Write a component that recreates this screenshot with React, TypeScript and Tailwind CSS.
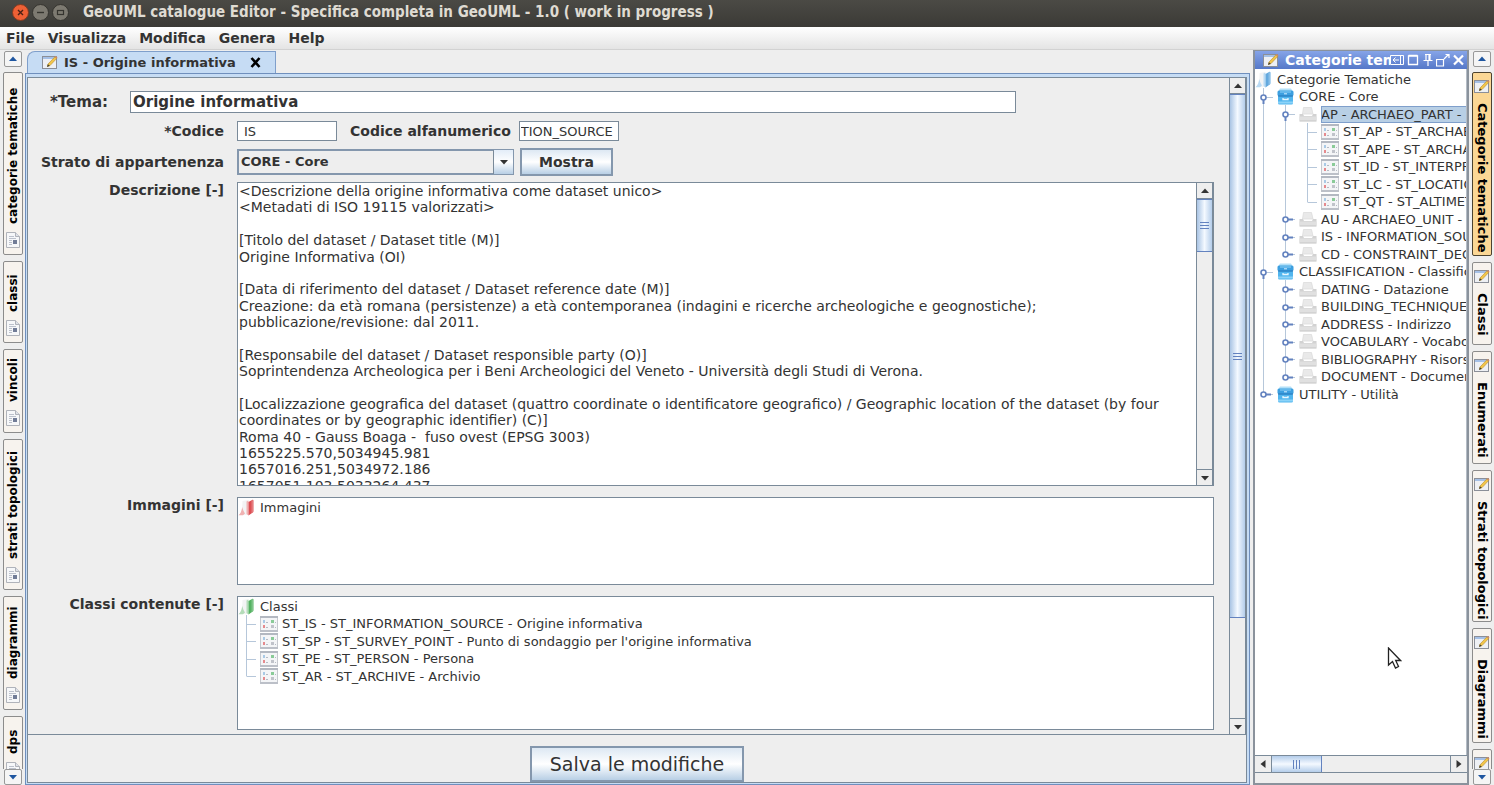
import { useState, type ReactNode } from "react";

type Guide = "blank" | "line" | "tee" | "elbow" | "open" | "closed" | "closedLast";
type IconName = "rootBlue" | "rootRed" | "rootGreen" | "store" | "tray" | "grid";

interface TreeRow {
  label: string;
  icon: IconName;
  guides: Guide[];
  selected?: boolean;
}

const LEFT_TABS = [
  { label: "categorie tematiche", size: "h-[183px]" },
  { label: "classi", size: "h-[82px]" },
  { label: "vincoli", size: "h-[84px]" },
  { label: "strati topologici", size: "h-[151px]" },
  { label: "diagrammi", size: "h-[114px]" },
  { label: "dps", size: "h-[69px]" },
];

const RIGHT_TABS = [
  { label: "Categorie tematiche", size: "h-[184px]", active: true },
  { label: "Classi", size: "h-[83px]" },
  { label: "Enumerati", size: "h-[113px]" },
  { label: "Strati topologici", size: "h-[152px]" },
  { label: "Diagrammi", size: "h-[115px]" },
  { label: "", size: "h-[84px]" },
];

const CATEGORIES: TreeRow[] = [
  { label: "Categorie Tematiche", icon: "rootBlue", guides: [] },
  { label: "CORE - Core", icon: "store", guides: ["open"] },
  { label: "AP - ARCHAEO_PART - Parte", icon: "tray", guides: ["line", "open"], selected: true },
  { label: "ST_AP - ST_ARCHAEO_PART", icon: "grid", guides: ["line", "line", "tee"] },
  { label: "ST_APE - ST_ARCHAEO_PART_EXT", icon: "grid", guides: ["line", "line", "tee"] },
  { label: "ST_ID - ST_INTERPRETATION", icon: "grid", guides: ["line", "line", "tee"] },
  { label: "ST_LC - ST_LOCATION", icon: "grid", guides: ["line", "line", "tee"] },
  { label: "ST_QT - ST_ALTIMETRY", icon: "grid", guides: ["line", "line", "elbow"] },
  { label: "AU - ARCHAEO_UNIT - Unità", icon: "tray", guides: ["line", "closed"] },
  { label: "IS - INFORMATION_SOURCE", icon: "tray", guides: ["line", "closed"] },
  { label: "CD - CONSTRAINT_DECREE", icon: "tray", guides: ["line", "closedLast"] },
  { label: "CLASSIFICATION - Classificazione", icon: "store", guides: ["open"] },
  { label: "DATING - Datazione", icon: "tray", guides: ["line", "closed"] },
  { label: "BUILDING_TECHNIQUE - Tecnica", icon: "tray", guides: ["line", "closed"] },
  { label: "ADDRESS - Indirizzo", icon: "tray", guides: ["line", "closed"] },
  { label: "VOCABULARY - Vocabolario", icon: "tray", guides: ["line", "closed"] },
  { label: "BIBLIOGRAPHY - Risorsa", icon: "tray", guides: ["line", "closed"] },
  { label: "DOCUMENT - Documento", icon: "tray", guides: ["line", "closedLast"] },
  { label: "UTILITY - Utilità", icon: "store", guides: ["closedLast"] },
];

const CLASSES: TreeRow[] = [
  { label: "Classi", icon: "rootGreen", guides: [] },
  { label: "ST_IS - ST_INFORMATION_SOURCE - Origine informativa", icon: "grid", guides: ["tee"] },
  { label: "ST_SP - ST_SURVEY_POINT - Punto di sondaggio per l'origine informativa", icon: "grid", guides: ["tee"] },
  { label: "ST_PE - ST_PERSON - Persona", icon: "grid", guides: ["tee"] },
  { label: "ST_AR - ST_ARCHIVE - Archivio", icon: "grid", guides: ["elbow"] },
];

const IMAGES: TreeRow[] = [{ label: "Immagini", icon: "rootRed", guides: [] }];

const DESCRIPTION = `<Descrizione della origine informativa come dataset unico>
<Metadati di ISO 19115 valorizzati>

[Titolo del dataset / Dataset title (M)]
Origine Informativa (OI)

[Data di riferimento del dataset / Dataset reference date (M)]
Creazione: da età romana (persistenze) a età contemporanea (indagini e ricerche archeologiche e geognostiche);
pubblicazione/revisione: dal 2011.

[Responsabile del dataset / Dataset responsible party (O)]
Soprintendenza Archeologica per i Beni Archeologici del Veneto - Università degli Studi di Verona.

[Localizzazione geografica del dataset (quattro coordinate o identificatore geografico) / Geographic location of the dataset (by four
coordinates or by geographic identifier) (C)]
Roma 40 - Gauss Boaga -  fuso ovest (EPSG 3003)
1655225.570,5034945.981
1657016.251,5034972.186
1657051.103,5033264.437`;

function PencilIcon() {
  return (
    <svg width="16" height="15" viewBox="0 0 16 15" className="shrink-0" aria-hidden="true">
      <rect x="0.5" y="1.5" width="14" height="12" fill="#eef0f4" stroke="#8b8f98" />
      <rect x="1" y="2" width="13" height="2" fill="#a5c0e6" />
      <path d="M5.5 11.5 L6 9 L12.8 2 L14.6 3.6 L8 10.6 Z" fill="#f2c64a" stroke="#b98a26" strokeWidth="0.6" />
      <path d="M5 12 L5.8 9.2 L7.8 10.8 Z" fill="#43402f" />
      <path d="M12.8 2 L13.8 1 L15.5 2.6 L14.6 3.6 Z" fill="#d38a62" />
    </svg>
  );
}

function SheetIcon() {
  return (
    <svg width="14" height="16" viewBox="0 0 14 16" className="shrink-0" aria-hidden="true">
      <path d="M0.5 0.5 H9.5 L13.5 4.5 V15.5 H0.5 Z" fill="#f6f7f9" stroke="#b0b3ba" />
      <path d="M9.5 0.5 V4.5 H13.5" fill="#dfe2e8" stroke="#b0b3ba" />
      <path d="M3 4.5 H8 M3 6.5 H10 M3 8.5 H6 M3 10.5 H6 M3 12.5 H6" stroke="#bcc1cc" />
      <rect x="7" y="8" width="4" height="4" fill="#717c97" />
    </svg>
  );
}

function FolderRoot({ light, dark }: { light: string; dark: string }) {
  return (
    <svg width="16" height="17" viewBox="0 0 16 17" aria-hidden="true">
      <path d="M1 16 Q4.5 13 4.5 2 L10 1 V16 Z" fill="#f3f4f5" />
      <path d="M0.5 16.2 Q3.5 14 4.2 8 Q5.5 13 7 14.5 L5 16.2 Z" fill={light} />
      <path d="M8.5 2.5 L10.5 1.5 V16.5 L8.5 15 Z" fill={light} />
      <path d="M10.5 3 L14.5 0.8 Q15.5 0.5 15.5 2 V12 Q15.5 13 14.8 13.5 L10.5 16.5 Z" fill={dark} />
      <path d="M13.5 1.4 L15.5 1 V12.5 L13.5 14.2 Z" fill={light} opacity="0.45" />
    </svg>
  );
}

function TreeIcon({ name }: { name: IconName }) {
  switch (name) {
    case "rootBlue":
      return <FolderRoot light="#b9daf4" dark="#64a9de" />;
    case "rootRed":
      return <FolderRoot light="#f0b2b2" dark="#dc4f54" />;
    case "rootGreen":
      return <FolderRoot light="#b4dcb9" dark="#55b263" />;
    case "store":
      return (
        <svg width="17" height="17" viewBox="0 0 17 17" aria-hidden="true">
          <path d="M3 0.5 H14 L16 4 H1 Z" fill="#b3e0f8" />
          <rect x="0.5" y="2.5" width="16" height="5.5" rx="1.5" fill="#3c9fe0" />
          <rect x="1" y="7.5" width="15" height="9" rx="1.5" fill="#51b5ee" />
          <path d="M1 14.5 H16" stroke="#8cd3f8" strokeWidth="2" />
          <path d="M1 8 H16" stroke="#1c6db2" />
          <path d="M3 4 H14" stroke="#8fd2f7" />
          <path d="M6 10 V11.5 H11 V10" fill="none" stroke="#e8f7ff" strokeWidth="1.3" />
          <path d="M7 5.8 H10" stroke="#d5efff" />
        </svg>
      );
    case "tray":
      return (
        <svg width="18" height="15" viewBox="0 0 18 15" aria-hidden="true">
          <path d="M4.5 0.5 H12.5 L14 7 H3.5 Z" fill="#e9e9e9" stroke="#dcdcdc" strokeWidth="0.8" />
          <path d="M0.5 7 H4 L5 9 H13 L14 7 H17.5 V13.5 H0.5 Z" fill="#d2d2d2" />
          <rect x="0.5" y="9.5" width="17" height="4" fill="#e0e0e0" />
          <path d="M0.5 14 H17.5" stroke="#c2c2c2" />
        </svg>
      );
    default:
      return (
        <svg width="18" height="16" viewBox="0 0 18 16" aria-hidden="true">
          <rect x="0.5" y="0.5" width="17" height="15" fill="#f4f5f7" stroke="#c6c9cf" />
          <rect x="0" y="0" width="18" height="2" fill="#b3b8c1" />
          <rect x="0" y="14" width="18" height="2" fill="#bcc0c8" />
          <rect x="3" y="4" width="2" height="3" fill="#a9cae6" />
          <rect x="11" y="4" width="3" height="3" fill="#8acb98" />
          <rect x="3" y="9" width="2" height="3" fill="#e58a8e" />
          <rect x="11" y="9" width="3" height="3" fill="#c0c3ca" />
          <path d="M6 6.5 H8 M15 6.5 H16 M6 11.5 H8 M15 11.5 H16" stroke="#b6bbc4" />
        </svg>
      );
  }
}

function GuideCell({ kind }: { kind: Guide }) {
  const isHandle = kind === "open" || kind === "closed" || kind === "closedLast";
  return (
    <svg width="22" height="18" viewBox="0 0 22 18" className="shrink-0" aria-hidden="true">
      {kind !== "blank" && (
        <path d={kind === "elbow" || kind === "closedLast" ? "M8.5 0 V9" : "M8.5 0 V18"} stroke="#b6c7da" />
      )}
      {kind !== "blank" && kind !== "line" && <path d="M8.5 9.5 H18" stroke="#b6c7da" />}
      {isHandle && (
        <path d={kind === "open" ? "M8.5 9 V16" : "M9 9.5 H16"} stroke="#6382bf" strokeWidth="2" />
      )}
      {isHandle && <circle cx="8.5" cy="9.5" r="2.5" fill="#fff" stroke="#6382bf" strokeWidth="1.6" />}
    </svg>
  );
}

function Tree({ rows }: { rows: TreeRow[] }) {
  return (
    <ul className="min-w-0 overflow-hidden whitespace-nowrap text-[13px] leading-[17px]">
      {rows.map((row) => (
        <li key={row.label} className="flex items-center overflow-hidden odd:h-[18px] even:h-[17px]">
          {row.guides.map((kind, i) => (
            <GuideCell key={i} kind={kind} />
          ))}
          <span className="flex w-[22px] shrink-0 items-center">
            <TreeIcon name={row.icon} />
          </span>
          <span className={row.selected ? "flex-1 bg-[#b8cfe5] outline -outline-offset-1 outline-[#7f9fcb]" : ""}>
            {row.label}
          </span>
        </li>
      ))}
    </ul>
  );
}

type Direction = "up" | "down" | "left" | "right";

const ARROWS: Record<Direction, string> = {
  up: "M1 6 L5 1.5 L9 6 Z",
  down: "M1 2 L5 6.5 L9 2 Z",
  left: "M7.5 0 L2.5 4 L7.5 8 Z",
  right: "M2.5 0 L7.5 4 L2.5 8 Z",
};

function Arrow({ direction, className = "fill-[#333]" }: { direction: Direction; className?: string }) {
  return (
    <svg width="10" height="8" viewBox="0 0 10 8" className={className} aria-hidden="true">
      <path d={ARROWS[direction]} />
    </svg>
  );
}

function VerticalScrollbar({ thumb }: { thumb: string }) {
  return (
    <div className="flex w-[17px] shrink-0 flex-col border-x border-[#7a8a99] bg-[#eee]">
      <button type="button" aria-label="Scorri su" className="flex h-4 items-center justify-center border-b border-[#7a8a99]">
        <Arrow direction="up" />
      </button>
      <div className="min-h-0 flex-1">
        <div
          className={`flex items-center justify-center border-y border-[#6382bf] bg-linear-to-r from-[#a9c4e4] via-[#f4f9ff] to-[#b4cdea] ${thumb}`}
        >
          <div className="h-[7px] w-[9px] border-y border-[#6382bf] py-[2px]">
            <div className="h-px bg-[#6382bf]" />
          </div>
        </div>
      </div>
      <button type="button" aria-label="Scorri giù" className="flex h-4 items-center justify-center border-t border-[#7a8a99]">
        <Arrow direction="down" />
      </button>
    </div>
  );
}

function StripArrow({ direction }: { direction: "up" | "down" }) {
  return (
    <button
      type="button"
      aria-label={direction === "up" ? "Schede precedenti" : "Schede successive"}
      className="flex h-4 w-[18px] shrink-0 items-center justify-center rounded-[2px] border border-[#989898] bg-[#f5f5f5]"
    >
      <Arrow direction={direction} className="fill-[#1f56a0]" />
    </button>
  );
}

function FormRow({ label, htmlFor, children }: { label: string; htmlFor?: string; children: ReactNode }) {
  return (
    <div className="flex gap-[13px]">
      <label htmlFor={htmlFor} className="w-[195px] shrink-0 text-right text-sm font-bold leading-4">
        {label}
      </label>
      {children}
    </div>
  );
}

function LeftStrip() {
  return (
    <nav aria-label="Indici" className="flex w-[25px] shrink-0 flex-col items-center gap-[5px] pt-px">
      <StripArrow direction="up" />
      <div className="flex min-h-0 flex-1 flex-col gap-[6px] overflow-hidden">
        {LEFT_TABS.map((tab) => (
          <button
            key={tab.label}
            type="button"
            className={`flex w-5 shrink-0 rotate-180 items-center gap-2 rounded-[2px] border border-[#8c8c8c] bg-[#f7f3ee] pt-[6px] text-xs font-bold text-black [writing-mode:vertical-rl] ${tab.size}`}
          >
            <span className="rotate-180">
              <SheetIcon />
            </span>
            {tab.label}
          </button>
        ))}
      </div>
      <div className="-mt-[5px]">
        <StripArrow direction="down" />
      </div>
    </nav>
  );
}

function RightStrip() {
  return (
    <nav aria-label="Pannelli" className="flex w-[25px] shrink-0 flex-col items-center gap-[5px] pt-px">
      <StripArrow direction="up" />
      <div className="flex min-h-0 flex-1 flex-col gap-[6px] overflow-hidden">
        {RIGHT_TABS.map((tab) => (
          <button
            key={tab.label}
            type="button"
            aria-label={tab.label || "Altro"}
            className={`flex w-5 shrink-0 items-center gap-[9px] overflow-hidden whitespace-nowrap rounded-[2px] border pt-[6px] text-[13px] leading-4 font-bold text-black [writing-mode:vertical-rl] ${
              tab.active ? "border-[#4c4330] bg-[#fbd795]" : "border-[#8c8c8c] bg-[#f7f3ee]"
            } ${tab.size}`}
          >
            <PencilIcon />
            {tab.label}
          </button>
        ))}
      </div>
      <div className="-mt-[5px]">
        <StripArrow direction="down" />
      </div>
    </nav>
  );
}

function Editor() {
  const [theme, setTheme] = useState("Origine informativa");
  const [code, setCode] = useState("IS");
  const [alpha, setAlpha] = useState("TION_SOURCE");
  const [description, setDescription] = useState(DESCRIPTION);

  return (
    <main className="flex min-w-0 flex-1 flex-col">
      <div className="flex h-[23px] shrink-0 items-end pl-[2px] pt-[2px]">
        <div className="flex h-[22px] items-center gap-[6px] rounded-tl-[8px] border border-b-0 border-[#7f9fcb] bg-[#c6dcf4] px-[14px] font-bold">
          <PencilIcon />
          <span>IS - Origine informativa</span>
          <button type="button" aria-label="Chiudi scheda" className="ml-2">
            <svg width="11" height="11" viewBox="0 0 11 11" aria-hidden="true">
              <path d="M1.5 1 L9.5 10 M9.5 1 L1.5 10" stroke="#000" strokeWidth="2.6" />
            </svg>
          </button>
        </div>
      </div>

      <div className="flex min-h-0 flex-1 flex-col border border-[#6f8fbd] bg-[#c6dcf4] p-px pr-[2px] pt-[3px]">
        <div className="flex min-h-0 flex-1 flex-col border border-[#7a8a99] bg-[#eee]">
          <div className="flex min-h-0 flex-1 border-b border-[#7a8a99]">
            <form className="flex min-w-0 flex-1 flex-col pl-px pr-[15px] pt-[13px]">
              <div className="flex items-center">
                <label htmlFor="tema" className="w-[101px] pl-[21px] text-[15px] font-bold">
                  *Tema:
                </label>
                <input
                  id="tema"
                  value={theme}
                  onChange={(e) => setTheme(e.target.value)}
                  className="mr-[198px] h-[22px] min-w-0 flex-1 border border-[#7a8a99] bg-white px-[2px] text-[15px] font-bold"
                />
              </div>

              <div className="mt-2 flex items-center">
                <label htmlFor="codice" className="mr-[13px] w-[195px] text-right text-sm font-bold">
                  *Codice
                </label>
                <input
                  id="codice"
                  value={code}
                  onChange={(e) => setCode(e.target.value)}
                  className="mr-[13px] h-5 w-[100px] border border-[#7a8a99] bg-white px-[6px]"
                />
                <label htmlFor="alfa" className="mr-2 text-sm font-bold">
                  Codice alfanumerico
                </label>
                <input
                  id="alfa"
                  value={alpha}
                  onChange={(e) => setAlpha(e.target.value)}
                  className="h-5 w-[100px] border border-[#7a8a99] bg-white px-px"
                />
              </div>

              <div className="mt-[7px] flex items-center">
                <label htmlFor="strato" className="mr-[13px] w-[195px] text-right text-sm font-bold">
                  Strato di appartenenza
                </label>
                <div className="relative w-[277px]">
                  <select
                    id="strato"
                    className="block h-[26px] w-full appearance-none border-2 border-[#8497ad] bg-[#eee] px-[2px] font-bold"
                  >
                    <option>CORE - Core</option>
                    <option>CLASSIFICATION - Classificazione</option>
                    <option>UTILITY - Utilità</option>
                  </select>
                  <span className="pointer-events-none absolute inset-y-px right-px flex w-5 items-center justify-center border-l border-[#7a8a99] bg-linear-to-b from-[#e3edf8] via-white to-[#b8cfe5]">
                    <Arrow direction="down" />
                  </span>
                </div>
                <button
                  type="button"
                  className="ml-[6px] h-7 w-[93px] border-2 border-[#8497ad] bg-linear-to-b from-[#dde8f3] via-white to-[#b8cfe5] text-sm font-bold"
                >
                  Mostra
                </button>
              </div>

              <div className="mt-[6px] flex flex-col gap-[11px]">
                <FormRow label="Descrizione [-]" htmlFor="descrizione">
                  <div className="flex h-[304px] min-w-0 flex-1 border border-[#7a8a99] bg-white">
                    <textarea
                      id="descrizione"
                      value={description}
                      onChange={(e) => setDescription(e.target.value)}
                      className="min-w-0 flex-1 resize-none overflow-hidden pl-px text-sm leading-[1.17]"
                    />
                    <VerticalScrollbar thumb="h-[53px]" />
                  </div>
                </FormRow>
                <FormRow label="Immagini [-]">
                  <div className="h-[88px] min-w-0 flex-1 border border-[#7a8a99] bg-white">
                    <Tree rows={IMAGES} />
                  </div>
                </FormRow>
                <FormRow label="Classi contenute [-]">
                  <div className="h-[134px] min-w-0 flex-1 border border-[#7a8a99] bg-white">
                    <Tree rows={CLASSES} />
                  </div>
                </FormRow>
              </div>
            </form>
            <VerticalScrollbar thumb="h-[84%]" />
          </div>

          <div className="flex h-[47px] shrink-0 items-end justify-center">
            <button
              type="button"
              className="h-9 w-[214px] border-2 border-[#8497ad] bg-linear-to-b from-[#dde8f3] via-white to-[#b8cfe5] text-[19px]"
            >
              Salva le modifiche
            </button>
          </div>
        </div>
      </div>
    </main>
  );
}

function CategoryPanel() {
  return (
    <aside className="ml-[3px] flex w-[216px] shrink-0 flex-col border-2 border-t border-[#8a929c] bg-[#eee]">
      <header className="flex h-[18px] shrink-0 items-center bg-linear-to-b from-[#86a4e8] to-[#5578c8] pl-2 pr-[2px] text-white">
        <PencilIcon />
        <h2 className="ml-[6px] min-w-0 flex-1 overflow-hidden whitespace-nowrap text-sm font-bold leading-[17px]">
          Categorie tematiche
        </h2>
        <div className="flex shrink-0 items-center gap-[2px]">
          <button type="button" aria-label="Nascondi">
            <svg width="14" height="12" viewBox="0 0 14 12" fill="none" stroke="#fff" aria-hidden="true">
              <path d="M0.5 1.5 H13.5 V10.5 H0.5 Z M10.5 1.5 V10.5 M3 6 H9 M5.5 3.5 L3 6 L5.5 8.5" />
            </svg>
          </button>
          <button type="button" aria-label="Ingrandisci">
            <svg width="14" height="12" viewBox="0 0 14 12" fill="none" stroke="#fff" aria-hidden="true">
              <path d="M2.5 2 H11.5 V10.5 H2.5 Z M2.5 1.5 H11.5" strokeWidth="1.3" />
            </svg>
          </button>
          <button type="button" aria-label="Blocca">
            <svg width="12" height="12" viewBox="0 0 12 12" fill="none" stroke="#fff" aria-hidden="true">
              <path d="M3 0.5 H9 M4 0.5 V6 M8 0.5 V6 M7 0.5 V6 M1.5 6.5 H10.5 M6 7 V12" strokeWidth="1.2" />
            </svg>
          </button>
          <button type="button" aria-label="Sgancia">
            <svg width="14" height="13" viewBox="0 0 14 13" fill="none" stroke="#fff" aria-hidden="true">
              <path d="M0.5 5.5 H7.5 V12 H0.5 Z M8 5 L12.5 0.5 M9.5 0.5 H13 V4" strokeWidth="1.2" />
            </svg>
          </button>
          <button type="button" aria-label="Chiudi">
            <svg width="13" height="12" viewBox="0 0 13 12" aria-hidden="true">
              <path d="M2 1.5 L11 10.5 M11 1.5 L2 10.5" stroke="#fff" strokeWidth="2.2" />
            </svg>
          </button>
        </div>
      </header>
      <div className="min-h-0 flex-1 overflow-hidden border-r border-[#b4bcc6] bg-white pt-px">
        <Tree rows={CATEGORIES} />
      </div>
      <div className="flex h-[18px] shrink-0 border-y border-[#7a8a99]">
        <button type="button" aria-label="Scorri a sinistra" className="flex w-4 items-center justify-center">
          <Arrow direction="left" />
        </button>
        <div className="flex-1 border-x border-[#7a8a99]">
          <div className="flex h-full w-[50px] items-center justify-center border-r border-[#6382bf] bg-linear-to-b from-[#b4cdea] via-[#f4f9ff] to-[#b4cdea]">
            <div className="h-[9px] w-[7px] border-x border-[#6382bf] px-[2px]">
              <div className="h-full w-px bg-[#6382bf]" />
            </div>
          </div>
        </div>
        <button type="button" aria-label="Scorri a destra" className="flex w-4 items-center justify-center">
          <Arrow direction="right" />
        </button>
      </div>
      <div className="h-[10px] shrink-0" />
    </aside>
  );
}

export default function App() {
  return (
    <div className="relative flex h-screen flex-col overflow-hidden bg-[#eee] font-['DejaVu_Sans',sans-serif] text-[13px] leading-4 text-[#333]">
      <header className="flex h-[27px] shrink-0 items-center bg-linear-to-b from-[#4b4a45] to-[#3b3a36] pb-[3px] pl-3">
        <div className="flex items-center gap-[3px]">
          <button type="button" aria-label="Chiudi finestra">
            <svg width="17" height="17" viewBox="0 0 17 17" className="block" aria-hidden="true">
              <circle cx="8.5" cy="8.5" r="8" fill="#ee6035" stroke="#7e3a22" />
              <path d="M6 6 L11 11 M11 6 L6 11" stroke="#4a2015" strokeWidth="1.4" />
            </svg>
          </button>
          <button type="button" aria-label="Riduci a icona">
            <svg width="17" height="17" viewBox="0 0 17 17" className="block" aria-hidden="true">
              <circle cx="8.5" cy="8.5" r="8" fill="#7d7a71" stroke="#35342f" />
              <path d="M5 8.5 H12" stroke="#35342f" strokeWidth="1.4" />
            </svg>
          </button>
          <button type="button" aria-label="Ingrandisci finestra">
            <svg width="17" height="17" viewBox="0 0 17 17" className="block" aria-hidden="true">
              <circle cx="8.5" cy="8.5" r="8" fill="#7d7a71" stroke="#35342f" />
              <rect x="5.5" y="6.5" width="6" height="4" fill="none" stroke="#35342f" strokeWidth="1.2" />
            </svg>
          </button>
        </div>
        <h1 className="ml-[14px] whitespace-nowrap font-['DejaVu_Sans_Condensed','Noto_Sans',sans-serif] text-[15px] font-bold text-[#dfdbd2]">
          GeoUML catalogue Editor - Specifica completa in GeoUML - 1.0 ( work in progress )
        </h1>
      </header>

      <nav
        aria-label="Menu"
        className="flex h-[23px] shrink-0 items-center gap-[13px] border-b border-[#d2d2d2] bg-linear-to-b from-white to-[#e4e4e4] pl-[6px] text-sm font-bold"
      >
        <button type="button">File</button>
        <button type="button">Visualizza</button>
        <button type="button">Modifica</button>
        <button type="button">Genera</button>
        <button type="button">Help</button>
      </nav>

      <div className="flex min-h-0 flex-1">
        <LeftStrip />
        <Editor />
        <CategoryPanel />
        <RightStrip />
      </div>

      <svg width="15" height="23" viewBox="0 0 15 23" className="pointer-events-none absolute left-[1387px] top-[647px]" aria-hidden="true">
        <path d="M1.5 1 V18 L5.5 14.5 L8.5 21 L11.5 19.5 L8.7 13.5 H13.5 Z" fill="#fff" stroke="#222" strokeWidth="1.3" />
      </svg>
    </div>
  );
}
